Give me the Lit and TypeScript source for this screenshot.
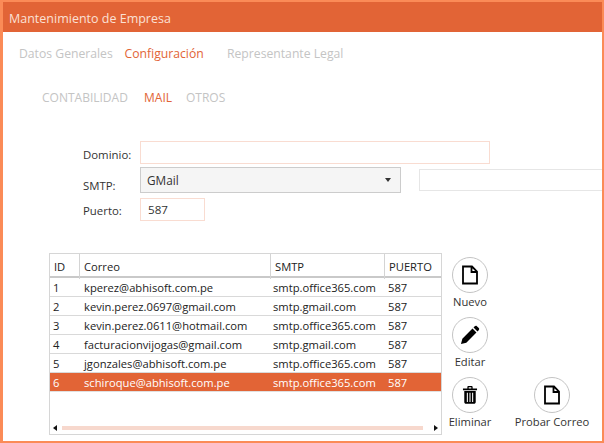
import { LitElement, html, css, svg } from "lit";
import { customElement } from "lit/decorators.js";

const rows = [
  ["1", "kperez@abhisoft.com.pe", "smtp.office365.com", "587"],
  ["2", "kevin.perez.0697@gmail.com", "smtp.gmail.com", "587"],
  ["3", "kevin.perez.0611@hotmail.com", "smtp.office365.com", "587"],
  ["4", "facturacionvijogas@gmail.com", "smtp.gmail.com", "587"],
  ["5", "jgonzales@abhisoft.com.pe", "smtp.office365.com", "587"],
  ["6", "schiroque@abhisoft.com.pe", "smtp.office365.com", "587"],
];

const docIcon = svg`<path d="M7 5.500h9l5 5V22.500H7z M15.500 5.500v5.500h5.500" fill="none" stroke="#000" stroke-width="1.800" stroke-linejoin="miter"/>`;
const penIcon = svg`<g transform="translate(14 14) scale(.86) translate(-14.500 -13.500)"><path d="M4 24l1.600-6.200L17.400 6l4.600 4.600L10.200 22.400z M18.600 4.800l1.400-1.400c.8-.8 1.800-.8 2.500-.1l2.200 2.200c.7.700.7 1.700-.1 2.500l-1.400 1.400z" fill="#000"/></g>`;
const trashIcon = svg`<g transform="translate(14 14) scale(.88) translate(-14 -14)"><path d="M6 6.500h16v2H6z M11 6.500V5c0-.7.500-1.200 1.200-1.200h3.600c.7 0 1.200.5 1.200 1.200v1.500h-1.500V5.300h-3v1.200z M7.500 9.500h13v12.500c0 1.200-.8 2-2 2h-9c-1.200 0-2-.8-2-2z" fill="#000"/><path d="M11 11.500v10.500 M14 11.500v10.500 M17 11.500v10.500" stroke="#fff" stroke-width="1.200"/></g>`;

@customElement("app-root")
export class AppRoot extends LitElement {
  static styles = css`
    :host {
      display: block;
      width: 604px;
      height: 443px;
      overflow: hidden;
      font-family: "Open Sans", "Noto Sans", sans-serif;
      color: #222;
    }
    * { box-sizing: border-box; }
    .frame {
      width: 604px;
      height: 443px;
      border: solid #fb8b57;
      border-width: 2px 2px 2px 3px;
      background: #fff;
      display: flex;
      flex-direction: column;
      overflow: hidden;
    }
    .title {
      height: 30px;
      flex: none;
      background: #e26436;
      color: #fbe0d5;
      font-size: 12.500px;
      line-height: 30px;
      padding: 2px 0 0 6px;
    }
    .tabs {
      display: flex;
      height: 18px;
      margin: 13px 0 0 16px;
      font-size: 12.200px;
      line-height: 18px;
      color: #c4c4c4;
    }
    .tabs .t1 { width: 105.500px; }
    .tabs .t2 { width: 102.500px; }
    .on { color: #e26436; }
    .subtabs {
      display: flex;
      height: 18px;
      margin: 26px 0 0 39px;
      font-size: 12px;
      line-height: 18px;
      color: #c4c4c4;
    }
    .subtabs .s1 { width: 102px; }
    .subtabs .s2 { width: 42px; }
    .form {
      display: flex;
      flex-direction: column;
      margin: 34px 0 0 80px;
      font-size: 11.400px;
      color: #333;
    }
    .row { display: flex; align-items: center; }
    .lbl { width: 57px; flex: none; }
    .row1 .lbl { padding-top: 4px; }
    .row3 .lbl { padding-top: 2px; }
    .in {
      border: 1px solid #f9dcd1;
      background: #fff;
      height: 23px;
      line-height: 21px;
      padding-left: 7px;
      font-size: 11.600px;
      flex: none;
    }
    .dominio { width: 350px; }
    .row2 { height: 28px; margin-top: 2px; }
    .row2 .lbl { align-self: flex-end; line-height: 16px; }
    .select {
      width: 261px;
      height: 26px;
      flex: none;
      border: 1px solid #ccc;
      background: #f5f5f5;
      display: flex;
      align-items: center;
      justify-content: space-between;
      padding: 0 9px 0 6px;
      font-size: 11.800px;
    }
    .caret {
      width: 0;
      height: 0;
      border: 3.500px solid transparent;
      border-top: 4px solid #333;
      border-bottom: 0;
    }
    .ghost {
      width: 190px;
      height: 22px;
      border: 1px solid #e6e6e6;
      margin-left: 18px;
      flex: none;
    }
    .row3 { margin-top: 4px; }
    .puerto { width: 65px; }
    .lower {
      display: flex;
      margin: 32px 0 0 46px;
    }
    .table {
      width: 393px;
      height: 182px;
      border: 1px solid #d6d6d6;
      display: flex;
      flex-direction: column;
      flex: none;
      font-size: 11.200px;
      color: #222;
    }
    .hd, .tr {
      display: grid;
      grid-template-columns: 30px 191px 114px 56px;
    }
    .hd {
      height: 24px;
      border-bottom: 2px solid #c9c9c9;
      line-height: 25px;
      font-size: 11.200px;
    }
    .hd span { padding-left: 4px; border-right: 1px solid #d4d4d4; }
    .hd span:last-child { border-right: 0; }
    .tr {
      height: 19px;
      line-height: 19px;
      border-bottom: 1px solid #d9d9d9;
      white-space: nowrap;
    }
    .tr span { padding-left: 3px; overflow: hidden; }
    .tr span:nth-child(2) { padding-left: 4px; }
    .tr span:nth-child(3) { padding-left: 2px; }
    .tr.sel { background: #e26436; color: #fff; border-bottom-color: #e0e0e0; }
    .sb {
      margin-top: auto;
      height: 14px;
      display: flex;
      align-items: center;
      padding: 1px 3px 0;
      gap: 5px;
    }
    .arr { width: 0; height: 0; flex: none; border: 3px solid transparent; }
    .arr.l { border-right: 4px solid #111; border-left: 0; }
    .arr.r { border-left: 4px solid #111; border-right: 0; }
    .bar { flex: 1; height: 4px; background: #f7d8cd; margin-right: 6px; }
    .actions {
      display: grid;
      grid-template-columns: 82px 82px;
      grid-auto-rows: 60px;
      margin: 4px 0 0 10px;
      width: 164px;
    }
    .act {
      width: 36px;
      display: flex;
      flex-direction: column;
      align-items: center;
      font-size: 11.200px;
      color: #333;
      white-space: nowrap;
    }
    .act.wide { grid-column: 2; }
    .circle {
      width: 36px;
      height: 36px;
      border-radius: 50%;
      border: 1px solid #c4c4c4;
      display: flex;
      align-items: center;
      justify-content: center;
      flex: none;
    }
    .circle svg { width: 28px; height: 28px; display: block; }
    .act label { margin-top: 1px; line-height: 16px; }
    .spacer { grid-column: 2; }
  `;

  private action(label: string, icon: unknown, wide = false) {
    return html`<div class="act ${wide ? "wide" : ""}">
      <div class="circle"><svg viewBox="0 0 28 28">${icon}</svg></div>
      <label>${label}</label>
    </div>`;
  }

  render() {
    return html`<div class="frame">
      <div class="title">Mantenimiento de Empresa</div>
      <div class="tabs">
        <span class="t1">Datos Generales</span>
        <span class="t2 on">Configuración</span>
        <span>Representante Legal</span>
      </div>
      <div class="subtabs">
        <span class="s1">CONTABILIDAD</span>
        <span class="s2 on">MAIL</span>
        <span>OTROS</span>
      </div>
      <div class="form">
        <div class="row row1"><span class="lbl">Dominio:</span><div class="in dominio"></div></div>
        <div class="row row2">
          <span class="lbl">SMTP:</span>
          <div class="select"><span>GMail</span><span class="caret"></span></div>
          <div class="ghost"></div>
        </div>
        <div class="row row3"><span class="lbl">Puerto:</span><div class="in puerto">587</div></div>
      </div>
      <div class="lower">
        <div class="table">
          <div class="hd"><span>ID</span><span>Correo</span><span>SMTP</span><span>PUERTO</span></div>
          ${rows.map(
            (r, i) => html`<div class="tr ${i === 5 ? "sel" : ""}">
              ${r.map((c) => html`<span>${c}</span>`)}
            </div>`
          )}
          <div class="sb"><span class="arr l"></span><div class="bar"></div><span class="arr r"></span></div>
        </div>
        <div class="actions">
          ${this.action("Nuevo", docIcon)}
          <div class="spacer"></div>
          ${this.action("Editar", penIcon)}
          <div class="spacer"></div>
          ${this.action("Eliminar", trashIcon)}
          ${this.action("Probar Correo", docIcon, true)}
        </div>
      </div>
    </div>`;
  }
}
